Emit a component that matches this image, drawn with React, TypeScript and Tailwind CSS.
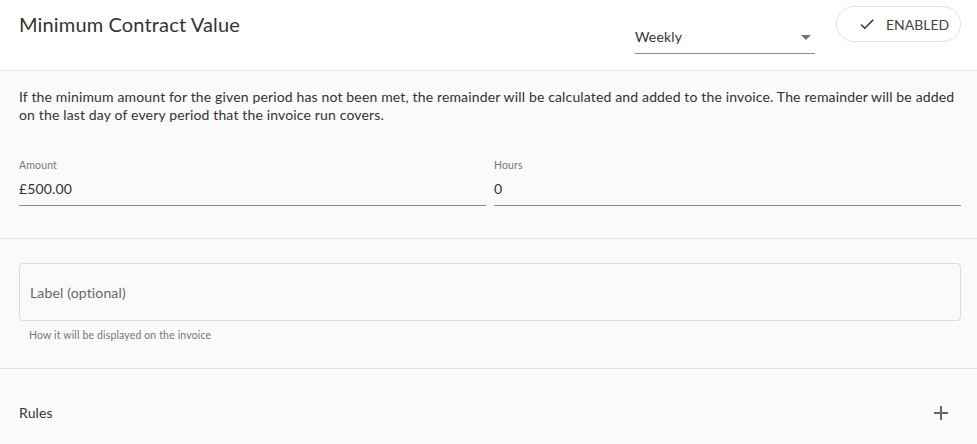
import { useState } from 'react';

const CheckIcon = ({ className }: { className?: string }) => (
  <svg className={className} viewBox="0 0 24 24" fill="currentColor">
    <path d="M9 16.17L4.83 12l-1.42 1.41L9 19 21 7l-1.41-1.41z" />
  </svg>
);

const PlusIcon = ({ className }: { className?: string }) => (
  <svg className={className} viewBox="0 0 14 14" fill="none" stroke="currentColor" strokeWidth={2}>
    <path d="M7 0v14M0 7h14" />
  </svg>
);

// Underlined text field with a small caption above it
const UnderlineField = ({ label, value }: { label: string; value: string }) => (
  <div className="flex-1 flex flex-col">
    <span className="text-[10.5px] leading-[12px] text-[#777]">{label}</span>
    <span className="mt-[8px] pb-[6px] text-[14px] leading-[20px] text-[#333] border-b border-[#8a8a8a]">
      {value}
    </span>
  </div>
);

export default function App() {
  const [enabled] = useState(true);
  const [period] = useState('Weekly');

  return (
    <div className="w-[977px] h-[444px] overflow-hidden bg-[#fafafa] font-['Lato','Noto_Sans',sans-serif] tracking-[0.15px] text-[#333]">
      {/* Header */}
      <div className="h-[71px] bg-white border-b border-[#ebebeb] flex pl-[19px] pr-[16px]">
        <h1 className="pt-[12px] text-[20px] leading-[24px] font-normal text-[#333]">Minimum Contract Value</h1>

        <div className="ml-auto flex items-start">
          <div className="mt-[27px] w-[180px] flex items-center justify-between border-b border-[#8a8a8a] pb-[6px]">
            <span className="text-[14px] leading-[20px] text-[#333]">{period}</span>
            <span className="mr-[4px] w-0 h-0 border-l-[5px] border-r-[5px] border-t-[5px] border-l-transparent border-r-transparent border-t-[#757575]" />
          </div>

          <button
            type="button"
            className="ml-[21px] mt-[6px] w-[125px] h-[36px] rounded-full border border-[#e0e0e0] bg-white flex items-center pl-[21px] gap-[10px] text-[14px] tracking-normal text-[#444]"
          >
            {enabled && <CheckIcon className="w-[18px] h-[18px] text-[#333]" />}
            <span>ENABLED</span>
          </button>
        </div>
      </div>

      {/* Period settings */}
      <div className="pl-[19px] pr-[16px] pt-[17px] pb-[32px] border-b border-[#e3e3e3]">
        <p className="text-[14px] leading-[18px] text-[#333]">
          If the minimum amount for the given period has not been met, the remainder will be calculated and added to the invoice. The remainder will be added on the last day of every period that the invoice run covers.
        </p>
        <div className="mt-[35px] flex gap-[8px]">
          <UnderlineField label="Amount" value="£500.00" />
          <UnderlineField label="Hours" value="0" />
        </div>
      </div>

      {/* Invoice label */}
      <div className="pl-[19px] pr-[16px] pt-[24px] pb-[27px] border-b border-[#e3e3e3]">
        <div className="h-[58px] rounded-[4px] border border-[#dcdcdc] flex items-center px-[10px]">
          <span className="text-[14px] text-[#666]">Label (optional)</span>
        </div>
        <p className="mt-[8px] px-[10px] text-[10.5px] leading-[12px] text-[#777]">How it will be displayed on the invoice</p>
      </div>

      {/* Rules */}
      <div className="pl-[19px] pr-[16px] pt-[34px] flex items-center justify-between">
        <span className="text-[14px] leading-[20px] text-[#333]">Rules</span>
        <PlusIcon className="mr-[13px] w-[14px] h-[14px] text-[#666]" />
      </div>
    </div>
  );
}
